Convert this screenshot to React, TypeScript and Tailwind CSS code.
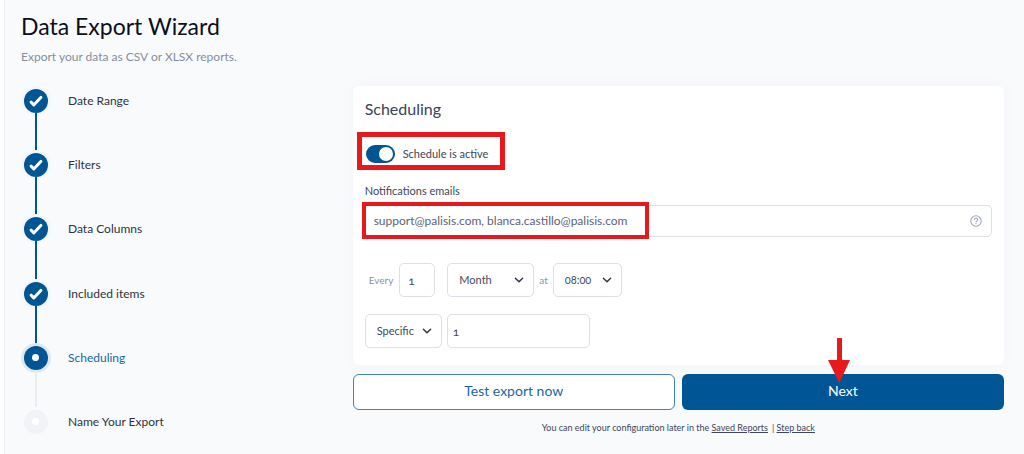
import { ReactNode, SelectHTMLAttributes } from "react";
import clsx from "clsx";

type StepState = "done" | "active" | "pending";

const steps: { label: string; state: StepState }[] = [
  { label: "Date Range", state: "done" },
  { label: "Filters", state: "done" },
  { label: "Data Columns", state: "done" },
  { label: "Included items", state: "done" },
  { label: "Scheduling", state: "active" },
  { label: "Name Your Export", state: "pending" },
];

function StepMarker({ state }: { state: StepState }) {
  return (
    <span
      className={clsx(
        "flex h-6 w-6 shrink-0 items-center justify-center rounded-full ring-3",
        state === "done" && "bg-[#005594] ring-[#f3f6fa]",
        state === "active" && "bg-[#005594] ring-[#dce8f0]",
        state === "pending" && "bg-[#f1f3f7] ring-[#f8fafc]"
      )}
    >
      {state === "done" ? (
        <svg className="h-3 w-3.5" viewBox="0 0 14 12" fill="none" stroke="white" strokeWidth={3} strokeLinecap="round" strokeLinejoin="round">
          <path d="M2.2 7.2l2.6 2.7L11.8 2.4" />
        </svg>
      ) : (
        <span className="h-[7px] w-[7px] rounded-full bg-white" />
      )}
    </span>
  );
}

function Stepper() {
  return (
    <ol className="flex flex-col">
      {steps.map((step, i) => {
        const next = steps[i + 1];
        return (
          <li key={step.label} aria-current={step.state === "active" ? "step" : undefined} className="flex flex-1 items-center gap-[18px]">
            <span className="flex w-[29px] flex-col items-center self-stretch">
              <span className={clsx("w-0.5 flex-1", i > 0 && (step.state === "pending" ? "bg-[#e9ecf0]" : "bg-[#005594]"))} />
              <StepMarker state={step.state} />
              <span className={clsx("w-0.5 flex-1", next && (next.state === "pending" ? "bg-[#e9ecf0]" : "bg-[#005594]"))} />
            </span>
            <span className={clsx("text-xs", step.state === "active" ? "text-[#1268a3]" : "text-[#2d3340]")}>{step.label}</span>
          </li>
        );
      })}
    </ol>
  );
}

function Select({ className, children, ...props }: SelectHTMLAttributes<HTMLSelectElement> & { children: ReactNode }) {
  return (
    <span className={clsx("relative block", className)}>
      <select
        {...props}
        className="h-[34px] w-full appearance-none rounded-[5px] border border-[#dcdfe8] bg-white pr-6 pl-[11px] text-[11px] text-[#434a5b] oldstyle-nums"
      >
        {children}
      </select>
      <svg
        className="pointer-events-none absolute top-3.5 right-2.5 h-1.5 w-2.5 text-[#2f3746]"
        viewBox="0 0 10 6"
        fill="none"
        stroke="currentColor"
        strokeWidth={1.5}
        strokeLinecap="round"
        strokeLinejoin="round"
      >
        <path d="M1.4 1.2L5 4.8l3.6-3.6" />
      </svg>
    </span>
  );
}

export default function App() {
  return (
    <div className="flex min-h-screen bg-white pl-1 font-['Lato','Noto_Sans',sans-serif]">
      <main className="flex flex-1 flex-col border-l border-[#f0f2f6] bg-[#f9fafc] pr-5 pl-4">
        <header className="h-[69px] pt-3">
          <h1 className="text-[23px] leading-7 text-[#0b0f1c]">Data Export Wizard</h1>
          <p className="mt-2 text-xs leading-[18px] text-[#868e9c]">Export your data as CSV or XLSX reports.</p>
        </header>

        <div className="grid flex-1 grid-cols-[1fr_2fr] gap-1.5">
          <Stepper />

          <section className="pt-[17px]">
            <div className="rounded-md bg-white px-3 pt-3 pb-[17px] shadow-[0_0_14px_rgba(30,60,90,0.03)]">
              <h2 className="text-base leading-[22px] text-[#3a4254]">Scheduling</h2>

              <div className="relative mt-[22px] flex h-6 items-center">
                <label className="flex items-center gap-2 pl-px text-[11px] text-[#3d4557]">
                  <input
                    type="checkbox"
                    role="switch"
                    defaultChecked
                    className="h-[18px] w-[29px] appearance-none rounded-full bg-[#9aa5b5] p-0.5 before:block before:h-3.5 before:w-3.5 before:rounded-full before:bg-white checked:bg-[#005594] checked:before:translate-x-[11px]"
                  />
                  Schedule is active
                </label>
                <span className="pointer-events-none absolute -top-2.5 -left-2 h-[38px] w-[148px] border-[5px] border-[#e8191c]" />
              </div>

              <label htmlFor="emails" className="mt-[17px] block text-[11px] leading-4 text-[#3d4557]">
                Notifications emails
              </label>
              <div className="relative mt-1.5">
                <input
                  id="emails"
                  type="text"
                  defaultValue="support@palisis.com, blanca.castillo@palisis.com"
                  className="h-8 w-full rounded-[5px] border border-[#dcdfe8] bg-white pr-8 pb-0.5 pl-2 text-xs text-[#5c6372]"
                />
                <button type="button" aria-label="Help" className="absolute top-2.5 right-2.5">
                  <svg className="h-3 w-3 text-[#a0a9bb]" viewBox="0 0 12 12" fill="none" stroke="currentColor" strokeWidth={1.1} strokeLinecap="round">
                    <circle cx="6" cy="6" r="5.2" />
                    <path d="M4.4 4.8a1.6 1.6 0 1 1 2.3 1.4c-.5.2-.7.4-.7.8M6 8.6v.2" />
                  </svg>
                </button>
                <span className="pointer-events-none absolute -top-[3px] -left-[3px] h-[37px] w-[287px] border-4 border-[#e8191c]" />
              </div>

              <div className="mt-[26px] flex items-center pl-1 text-[10px] text-[#8b93a3]">
                <label htmlFor="interval">Every</label>
                <input
                  id="interval"
                  type="text"
                  defaultValue="1"
                  className="ml-1.5 h-[34px] w-9 rounded-[5px] border border-[#dcdfe8] bg-white pl-2 text-xs text-[#434a5b] oldstyle-nums"
                />
                <Select aria-label="Unit" className="ml-3 w-[87px]">
                  <option>Month</option>
                </Select>
                <label htmlFor="time" className="mx-[5px]">at</label>
                <Select id="time" className="w-[69px]">
                  <option>08:00</option>
                </Select>
              </div>

              <div className="mt-[17px] flex gap-[5px]">
                <Select aria-label="Day type" className="w-[77px]">
                  <option>Specific</option>
                </Select>
                <input
                  aria-label="Day"
                  type="text"
                  defaultValue="1"
                  className="h-[34px] w-[143px] rounded-[5px] border border-[#dcdfe8] bg-white pl-[5px] text-xs text-[#434a5b] oldstyle-nums"
                />
              </div>
            </div>

            <div className="mt-[9px] grid grid-cols-2 gap-[7px]">
              <button type="button" className="h-9 rounded-md border border-[#3f83b5] bg-white pb-0.5 text-sm text-[#1a679f]">
                Test export now
              </button>
              <div className="relative">
                <button type="button" className="h-9 w-full rounded-md bg-[#005594] pb-0.5 text-sm text-white">
                  Next
                </button>
                <svg className="pointer-events-none absolute -top-9 left-[146px] h-[45px] w-[22px]" viewBox="0 0 22 45" fill="#e8191c">
                  <path d="M9 0h5v22h8L11.3 45 0 22h9z" />
                </svg>
              </div>
            </div>

            <p className="mt-[11px] text-center text-[9px] leading-[14px] text-[#3d4557]">
              You can edit your configuration later in the{" "}
              <a href="#saved-reports" className="underline">Saved Reports</a>
              <span className="ml-1">|</span>{" "}
              <a href="#step-back" className="underline">Step back</a>
            </p>
          </section>
        </div>
      </main>
    </div>
  );
}
